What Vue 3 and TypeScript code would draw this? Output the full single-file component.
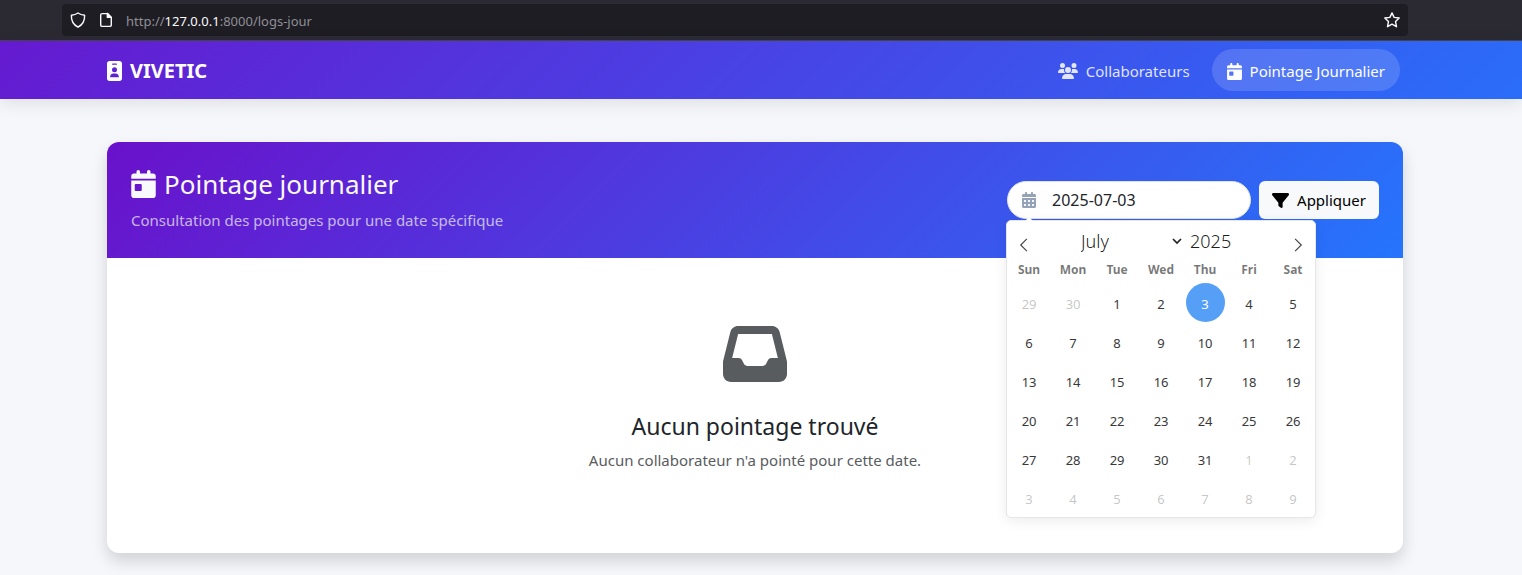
<script setup lang="ts">
import { computed, ref } from 'vue'

interface Day {
  key: string
  label: number
  outside: boolean
  selected: boolean
}

const months = [
  'January', 'February', 'March', 'April', 'May', 'June',
  'July', 'August', 'September', 'October', 'November', 'December',
]
const weekdays = ['Sun', 'Mon', 'Tue', 'Wed', 'Thu', 'Fri', 'Sat']

const month = ref(6)
const year = ref(2025)
const picked = ref('2025-07-03')

const iso = (d: Date): string =>
  `${d.getFullYear()}-${String(d.getMonth() + 1).padStart(2, '0')}-${String(d.getDate()).padStart(2, '0')}`

const weeks = computed<Day[][]>(() => {
  const lead = new Date(year.value, month.value, 1).getDay()
  return Array.from({ length: 6 }, (_, w) =>
    Array.from({ length: 7 }, (_, d) => {
      const date = new Date(year.value, month.value, 1 - lead + w * 7 + d)
      return {
        key: iso(date),
        label: date.getDate(),
        outside: date.getMonth() !== month.value,
        selected: iso(date) === picked.value,
      }
    }),
  )
})

function shift(step: number): void {
  const d = new Date(year.value, month.value + step, 1)
  month.value = d.getMonth()
  year.value = d.getFullYear()
}

const calendarTop =
  'M128 0c17.7 0 32 14.3 32 32V64H288V32c0-17.7 14.3-32 32-32s32 14.3 32 32V64h48c26.5 0 48 21.5 48 48v48H0V112C0 85.5 21.5 64 48 64H96V32c0-17.7 14.3-32 32-32zM0 192H448V464c0 26.5-21.5 48-48 48H48c-26.5 0-48-21.5-48-48V192z'
const calendarDay =
  calendarTop + 'm80 64c-8.8 0-16 7.2-16 16v96c0 8.8 7.2 16 16 16h96c8.8 0 16-7.2 16-16V272c0-8.8-7.2-16-16-16H80z'
const cell =
  'v32c0 8.8 7.2 16 16 16h32c8.8 0 16-7.2 16-16v-32c0-8.8-7.2-16-16-16h-32c-8.8 0-16 7.2-16 16z'
const calendarDays =
  calendarTop + [64, 192, 320].map((x) => `M${x} 272${cell}M${x} 400${cell}`).join('')
</script>

<template>
  <div class="page">
    <div class="chrome">
      <div class="urlbar">
        <svg class="glyph" viewBox="0 0 16 16" aria-hidden="true">
          <path d="M8 1C10 2.300 12.300 3 14.600 3.300C14.900 8.600 12.400 12.900 8 15.200C3.600 12.900 1.100 8.600 1.400 3.300C3.700 3 6 2.300 8 1Z" />
        </svg>
        <svg class="glyph" viewBox="0 0 16 16" aria-hidden="true">
          <path d="M9.500 1.600H4.200Q2.700 1.600 2.700 3.100V12.900Q2.700 14.400 4.200 14.400H11.800Q13.300 14.400 13.300 12.900V5.400L9.500 1.600V5.400H13.300" />
          <path class="fold" d="M9.500 1.600V5.400H13.300Z" />
        </svg>
        <span class="url">http://<b>127.0.0.1</b>:8000/logs-jour</span>
        <button class="star" type="button" aria-label="Bookmark">
          <svg class="glyph" viewBox="0 0 16 16" aria-hidden="true">
            <path d="M8 .9L10.100 5.400L15.200 6L11.500 9.500L12.500 14.700L8 12.200L3.500 14.700L4.500 9.500L.8 6L5.900 5.400Z" />
          </svg>
        </button>
      </div>
    </div>

    <header class="navbar">
      <div class="container nav-row">
        <a class="brand" href="#">
          <svg class="brand-icon" viewBox="0 0 384 512" aria-hidden="true">
            <path d="M64 0C28.700 0 0 28.700 0 64V448c0 35.300 28.700 64 64 64H320c35.300 0 64-28.700 64-64V64c0-35.300-28.700-64-64-64H64zm96 320h64c44.200 0 80 35.800 80 80c0 8.800-7.200 16-16 16H96c-8.800 0-16-7.200-16-16c0-44.200 35.800-80 80-80zm-32-96a64 64 0 1 1 128 0 64 64 0 1 1 -128 0zM144 64h96c8.800 0 16 7.200 16 16s-7.200 16-16 16H144c-8.800 0-16-7.200-16-16s7.200-16 16-16z" />
          </svg>
          VIVETIC
        </a>
        <nav class="links">
          <a class="link" href="#">
            <svg class="users-icon" viewBox="0 0 640 512" aria-hidden="true">
              <path d="M144 0a80 80 0 1 1 0 160A80 80 0 1 1 144 0zM512 0a80 80 0 1 1 0 160A80 80 0 1 1 512 0zM0 298.700C0 239.800 47.800 192 106.700 192h42.700c15.900 0 31 3.500 44.600 9.700c-1.300 7.200-1.900 14.700-1.900 22.300c0 38.200 16.800 72.500 43.300 96c-.2 0-.4 0-.7 0H21.300C9.600 320 0 310.400 0 298.700zM405.300 320c-.2 0-.4 0-.7 0c26.600-23.500 43.300-57.800 43.300-96c0-7.600-.7-15-1.900-22.300c13.600-6.300 28.700-9.700 44.600-9.700h42.700C592.200 192 640 239.800 640 298.700c0 11.800-9.600 21.300-21.300 21.300H405.300zM224 224a96 96 0 1 1 192 0 96 96 0 1 1 -192 0zM128 485.300C128 411.700 187.700 352 261.300 352H378.700C452.300 352 512 411.700 512 485.300c0 14.700-11.900 26.700-26.700 26.700H154.700c-14.700 0-26.700-11.900-26.700-26.700z" />
            </svg>
            Collaborateurs
          </a>
          <a class="link active" href="#" aria-current="page">
            <svg class="day-icon" viewBox="0 0 448 512" aria-hidden="true"><path :d="calendarDay" /></svg>
            Pointage Journalier
          </a>
        </nav>
      </div>
    </header>

    <main class="container main">
      <section class="card">
        <div class="card-head">
          <div>
            <h1 class="title">
              <svg class="title-icon" viewBox="0 0 448 512" aria-hidden="true"><path :d="calendarDay" /></svg>
              Pointage journalier
            </h1>
            <p class="subtitle">Consultation des pointages pour une date spécifique</p>
          </div>

          <form class="filter" @submit.prevent>
            <div class="date-field">
              <svg class="field-icon" viewBox="0 0 448 512" aria-hidden="true">
                <path fill-rule="evenodd" :d="calendarDays" />
              </svg>
              <input v-model="picked" class="date-input" type="text" aria-label="Date" />
            </div>
            <button class="apply" type="submit">
              <svg class="filter-icon" viewBox="0 0 512 512" aria-hidden="true">
                <path d="M3.900 54.900C10.500 40.900 24.500 32 40 32H472c15.500 0 29.500 8.900 36.100 22.900s4.600 30.500-5.200 42.500L320 320.900V448c0 12.100-6.800 23.200-17.700 28.600s-23.800 4.300-33.500-3l-64-48c-8.100-6-12.800-15.500-12.800-25.600V320.900L9 97.300C-.7 85.400-2.800 68.800 3.900 54.900z" />
              </svg>
              Appliquer
            </button>

            <div class="calendar">
              <div class="cal-head">
                <button class="arrow" type="button" aria-label="Previous month" @click="shift(-1)">
                  <svg viewBox="0 0 17 17" aria-hidden="true"><path d="M12 1L4.500 8.500L12 16" /></svg>
                </button>
                <div class="month-wrap">
                  <select v-model="month" class="month" aria-label="Month">
                    <option v-for="(name, i) in months" :key="name" :value="i">{{ name }}</option>
                  </select>
                  <svg class="caret" viewBox="0 0 10 10" aria-hidden="true"><path d="M1 3L5 7L9 3" /></svg>
                </div>
                <input v-model.number="year" class="year" type="number" aria-label="Year" />
                <button class="arrow next" type="button" aria-label="Next month" @click="shift(1)">
                  <svg viewBox="0 0 17 17" aria-hidden="true"><path d="M5 1L12.500 8.500L5 16" /></svg>
                </button>
              </div>
              <table class="grid">
                <thead>
                  <tr>
                    <th v-for="name in weekdays" :key="name" scope="col">{{ name }}</th>
                  </tr>
                </thead>
                <tbody>
                  <tr v-for="(week, i) in weeks" :key="i">
                    <td v-for="day in week" :key="day.key">
                      <button
                        class="day"
                        :class="{ outside: day.outside, selected: day.selected }"
                        type="button"
                        @click="picked = day.key"
                      >{{ day.label }}</button>
                    </td>
                  </tr>
                </tbody>
              </table>
            </div>
          </form>
        </div>

        <div class="empty">
          <svg class="inbox" viewBox="0 0 512 512" aria-hidden="true">
            <path d="M121 32C91.600 32 66 52 58.900 80.500L1.900 308.400C.6 313.500 0 318.700 0 323.900V416c0 35.300 28.700 64 64 64H448c35.300 0 64-28.700 64-64V323.900c0-5.200-.6-10.400-1.900-15.500l-57-227.900C446 52 420.400 32 391 32H121zm0 64H391l48 192H387.800c-12.100 0-23.200 6.800-28.600 17.700l-14.300 28.600c-5.400 10.800-16.500 17.700-28.600 17.700H195.800c-12.100 0-23.200-6.800-28.600-17.700l-14.300-28.600c-5.400-10.800-16.500-17.700-28.600-17.700H73L121 96z" />
          </svg>
          <h2 class="empty-title">Aucun pointage trouvé</h2>
          <p class="empty-text">Aucun collaborateur n'a pointé pour cette date.</p>
        </div>
      </section>
    </main>
  </div>
</template>

<style>
body {
  margin: 0;
  background: #f5f7fb;
}
</style>

<style scoped>
.page,
.page button,
.page input,
.page select {
  font-family: 'Segoe UI', 'Noto Sans', 'Open Sans', sans-serif;
}

.page {
  font-size: 15px;
  line-height: 24px;
  color: #212529;
}

.page *,
.page *::before {
  box-sizing: border-box;
}

.chrome {
  padding: 4px 114px 4px 62px;
  background: #2b2a33;
  border-bottom: 1px solid #46454d;
}

.urlbar {
  display: flex;
  align-items: center;
  gap: 12px;
  height: 32px;
  padding: 0 8px;
  border-radius: 4px;
  background: #1e1d23;
  font-size: 13px;
  color: #8f8f96;
}

.url {
  padding-top: 1px;
}

.url b {
  font-weight: 400;
  color: #fbfbfe;
}

.glyph {
  display: block;
  width: 16px;
  height: 16px;
  fill: none;
  stroke: #fbfbfe;
  stroke-width: 1.400;
  stroke-linejoin: round;
}

.glyph .fold {
  fill: #fbfbfe;
}

.star {
  margin-left: auto;
  padding: 0;
  border: 0;
  background: none;
}

.container {
  width: 100%;
  max-width: 1308px;
  margin: 0 auto;
  padding-right: 12px;
}

.navbar {
  position: relative;
  background: linear-gradient(135deg, #651ad0 0%, #2a6df9 100%);
  box-shadow: 0 4px 16px rgba(0, 0, 0, 0.1);
}

.nav-row {
  display: flex;
  align-items: center;
  justify-content: space-between;
  height: 58px;
}

.navbar a {
  padding-top: 2px;
  text-decoration: none;
}

.brand {
  display: flex;
  align-items: center;
  gap: 8px;
  font-size: 20px;
  font-weight: 700;
  color: #fff;
}

.brand-icon {
  width: 15px;
  height: 20px;
  fill: #fff;
}

.links {
  display: flex;
  gap: 7px;
  padding-right: 3px;
}

.link {
  display: flex;
  align-items: center;
  gap: 8px;
  height: 42px;
  padding: 0 15px;
  border-radius: 21px;
  color: rgba(255, 255, 255, 0.85);
  fill: rgba(255, 255, 255, 0.85);
}

.link.active {
  background: rgba(255, 255, 255, 0.15);
  color: #fff;
  fill: #fff;
}

.users-icon {
  width: 20px;
  height: 16px;
}

.day-icon {
  width: 15px;
  height: 17px;
}

.main {
  padding-top: 43px;
  padding-bottom: 22px;
}

.card {
  border-radius: 12px;
  background: #fff;
  box-shadow: 0 8px 16px rgba(0, 0, 0, 0.15);
}

.card-head {
  display: flex;
  align-items: center;
  justify-content: space-between;
  padding: 24px;
  border-radius: 12px 12px 0 0;
  background: linear-gradient(135deg, #6a11cb 0%, #2575fc 100%);
}

.title {
  display: flex;
  align-items: center;
  gap: 8px;
  margin: 0 0 6px;
  font-size: 26px;
  line-height: 36px;
  font-weight: 400;
  color: #f8f9fa;
}

.title-icon {
  width: 25px;
  height: 28px;
  fill: #f8f9fa;
}

.subtitle {
  margin: 0 0 2px;
  color: rgba(248, 249, 250, 0.7);
}

.filter {
  position: relative;
  display: flex;
  gap: 8px;
}

.date-field {
  display: flex;
  align-items: center;
  gap: 16px;
  width: 244px;
  height: 38px;
  padding: 0 14px;
  border: 1px solid #dee2e6;
  border-radius: 19px;
  background: #fff;
}

.field-icon {
  flex: none;
  width: 14px;
  height: 16px;
  fill: #94a3b8;
}

.date-input {
  flex: 1;
  min-width: 0;
  padding: 0;
  border: 0;
  outline: 0;
  background: none;
  font-size: 16px;
  line-height: 24px;
  color: #212529;
}

.apply {
  display: flex;
  align-items: center;
  gap: 8px;
  padding: 0 13px;
  border: 0;
  border-radius: 6px;
  background: #f8f9fa;
  font-size: 15px;
  line-height: 24px;
  color: #000;
}

.filter-icon {
  width: 17px;
  height: 17px;
}

.calendar {
  position: absolute;
  z-index: 2;
  top: 39px;
  left: -1px;
  width: 310px;
  border: 1px solid #e6e6e6;
  border-radius: 5px;
  background: #fff;
  box-shadow: 0 3px 13px rgba(0, 0, 0, 0.08);
}

.calendar::before {
  content: '';
  position: absolute;
  bottom: 100%;
  left: 18px;
  border: 4px solid transparent;
  border-top-width: 0;
  border-bottom-color: #fff;
}

.cal-head {
  display: flex;
  align-items: center;
  height: 40px;
}

.arrow {
  width: 34px;
  height: 32px;
  padding: 8px 10px 0;
  border: 0;
  background: none;
}

.arrow svg {
  display: block;
  width: 14px;
  height: 14px;
  fill: none;
  stroke: #3c3f40;
  stroke-width: 1.300;
}

.next {
  margin-left: auto;
}

.month-wrap {
  display: grid;
  align-items: center;
  width: 105px;
  margin-left: 36px;
}

.month,
.caret {
  grid-area: 1 / 1;
}

.month,
.year {
  appearance: none;
  border: 0;
  outline: 0;
  background: none;
  font-size: 18px;
  line-height: 24px;
  font-weight: 300;
  color: rgba(0, 0, 0, 0.9);
}

.month {
  width: 100%;
  padding: 0 4px;
}

.caret {
  justify-self: end;
  width: 10px;
  height: 10px;
  fill: none;
  stroke: #222;
  stroke-width: 1.700;
  pointer-events: none;
}

.year {
  width: 52px;
  margin-left: 8px;
  padding: 0;
  appearance: textfield;
}

.year::-webkit-inner-spin-button {
  appearance: none;
  margin: 0;
}

.grid {
  width: 100%;
  table-layout: fixed;
  border-collapse: collapse;
}

.grid th {
  height: 22px;
  padding: 0 0 4px;
  font-size: 12px;
  line-height: 18px;
  font-weight: 700;
  color: rgba(0, 0, 0, 0.54);
}

.grid td {
  padding: 0;
}

.day {
  display: block;
  width: 39px;
  height: 39px;
  margin: 0 auto;
  padding: 2px 0 0;
  border: 0;
  border-radius: 50%;
  background: none;
  font-size: 13px;
  color: #393939;
}

.day.outside {
  color: rgba(57, 57, 57, 0.3);
}

.day.selected {
  background: #569ff7;
  color: #fff;
}

.empty {
  display: flex;
  flex-direction: column;
  align-items: center;
  padding: 64px 24px 81px;
  text-align: center;
}

.inbox {
  width: 64px;
  height: 64px;
  margin-bottom: 24px;
  fill: #595c5f;
}

.empty-title {
  margin: 0 0 6px;
  font-size: 23px;
  line-height: 32px;
  font-weight: 400;
}

.empty-text {
  margin: 0;
  color: #595c5f;
}
</style>
